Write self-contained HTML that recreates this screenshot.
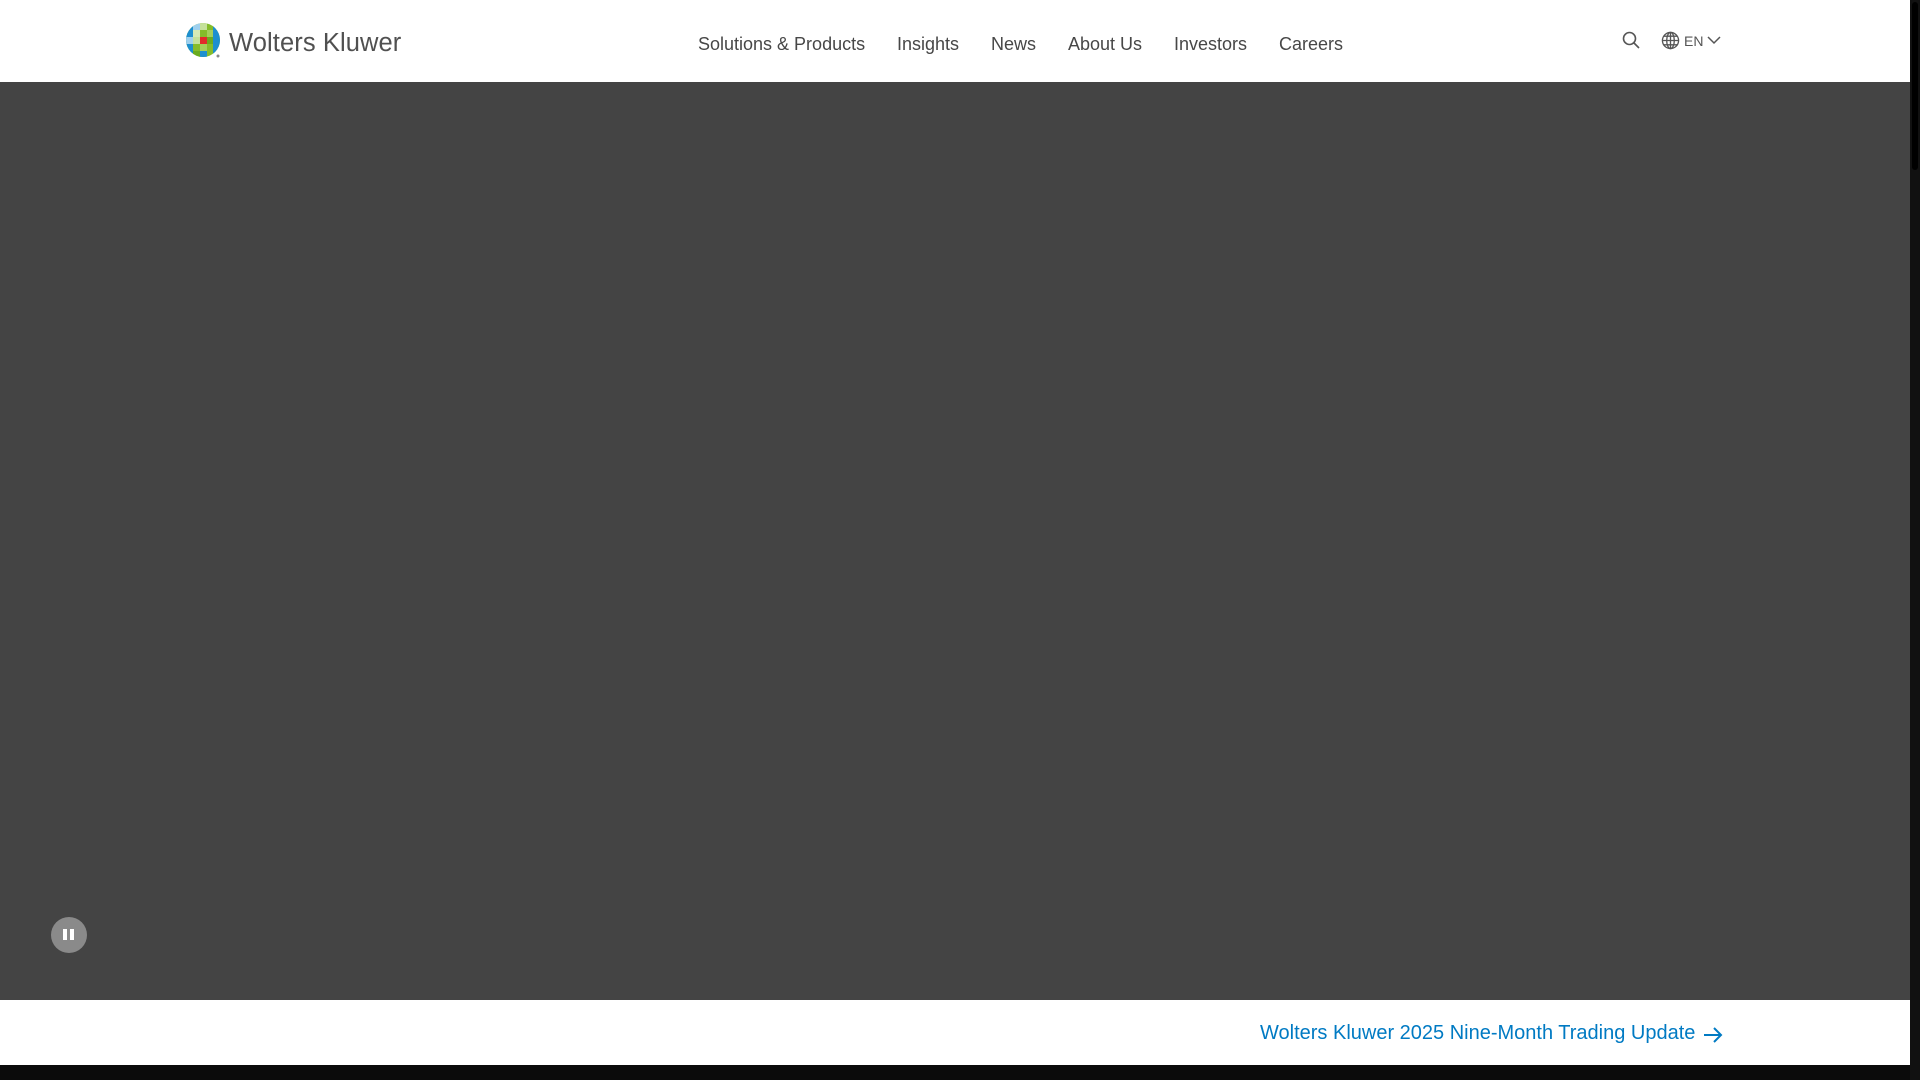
<!DOCTYPE html>
<html><head><meta charset="utf-8"><style>
*{margin:0;padding:0;box-sizing:border-box}
body{width:1920px;height:1080px;overflow:hidden;background:#0b0b0b;font-family:"Liberation Sans",sans-serif;position:relative}
.hdr{position:absolute;left:0;top:0;width:1910px;height:82px;background:#fff}
.hero{position:absolute;left:0;top:82px;width:1910px;height:918px;background:#444}
.band{position:absolute;left:0;top:1000px;width:1910px;height:65px;background:#fff}
.sb{position:absolute;left:1910px;top:0;width:10px;height:1080px;background:#111}
.thumb{position:absolute;left:1912px;top:2px;width:6px;height:168px;background:#000;border-radius:3px}
.nav span{position:absolute;top:34px;font-size:18px;color:#474747;white-space:nowrap}
.logo{position:absolute;left:186px;top:23px}
.lt{position:absolute;left:229px;top:29px;font-size:25.5px;color:#505050;letter-spacing:0.1px;font-family:"Liberation Sans",sans-serif}
.link{position:absolute;left:1260px;top:1022px;font-size:20px;color:#007ac3;white-space:nowrap}
.pause{position:absolute;left:51px;top:917px;width:36px;height:36px;border-radius:50%;background:#8a8a8a}
.pause i{position:absolute;top:12px;width:4px;height:11px;background:#fff}
</style></head><body>
<div class="hdr">
<svg class="logo" width="36" height="36" viewBox="0 0 36 36">
<defs><clipPath id="c"><circle cx="17" cy="17" r="17"/></clipPath></defs>
<g clip-path="url(#c)">
<rect width="36" height="36" fill="#85bc2a"/>
<rect x="0" y="0" width="7" height="36" fill="#1d8fcf"/>
<rect x="27" y="0" width="9" height="36" fill="#1d8fcf"/>
<rect x="7" y="0" width="7" height="7" fill="#9fd0ee"/>
<rect x="14" y="0" width="7" height="7" fill="#c5e19a"/>
<rect x="7" y="7" width="7" height="7" fill="#d6eab5"/>
<rect x="21" y="7" width="6" height="7" fill="#a4cf5a"/>
<rect x="0" y="14" width="7" height="7" fill="#9fd0ee"/>
<rect x="14" y="14" width="7" height="7" fill="#e22a2a"/>
<rect x="7" y="14" width="7" height="7" fill="#c5e19a"/>
<rect x="21" y="14" width="6" height="7" fill="#6aab1f"/>
<rect x="14" y="21" width="7" height="7" fill="#a4cf5a"/>
<rect x="7" y="28" width="7" height="8" fill="#6aab1f"/>
<rect x="14" y="28" width="7" height="8" fill="#1d8fcf"/>
</g>
<circle cx="32" cy="33" r="1.5" fill="#888"/>
</svg>
<div class="lt">Wolters Kluwer</div>
<div class="nav">
<span style="left:698px">Solutions &amp; Products</span>
<span style="left:897px">Insights</span>
<span style="left:991px">News</span>
<span style="left:1068px">About Us</span>
<span style="left:1174px">Investors</span>
<span style="left:1279px">Careers</span>
</div>
<svg style="position:absolute;left:1622px;top:31px" width="18" height="18" viewBox="0 0 18 18" fill="none" stroke="#555" stroke-width="1.6"><circle cx="7.5" cy="7.5" r="6"/><path d="M12 12l5 5"/></svg>
<svg style="position:absolute;left:1661px;top:31px" width="19" height="19" viewBox="0 0 20 20" fill="none" stroke="#555" stroke-width="1.4"><circle cx="10" cy="10" r="8.5"/><ellipse cx="10" cy="10" rx="4" ry="8.5"/><path d="M1.5 10h17M3 5.5h14M3 14.5h14M10 1.5v17"/></svg>
<span style="position:absolute;left:1684px;top:33px;font-size:14px;color:#555">EN</span>
<svg style="position:absolute;left:1707px;top:36px" width="14" height="9" viewBox="0 0 14 9" fill="none" stroke="#555" stroke-width="1.5"><path d="M1 1l6 6 6-6"/></svg>
</div>
<div class="hero"></div>
<div class="pause"><i style="left:12px"></i><i style="left:19px"></i></div>
<div class="band"></div>
<div class="link">Wolters Kluwer 2025 Nine-Month Trading Update</div>
<svg style="position:absolute;left:1703px;top:1026px" width="20" height="18" viewBox="0 0 20 18" fill="none" stroke="#007ac3" stroke-width="2"><path d="M1 9h17M11 2l7 7-7 7"/></svg>
<div class="sb"></div><div class="thumb"></div>
</body></html>
